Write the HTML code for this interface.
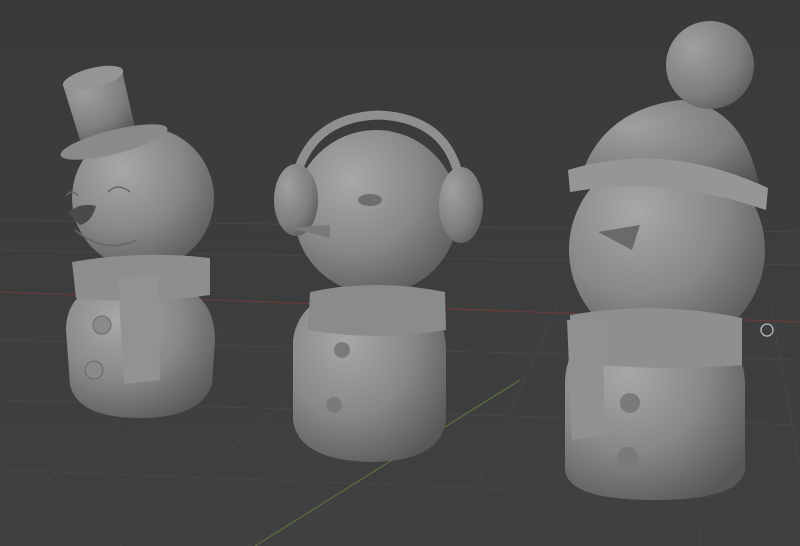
<!DOCTYPE html>
<html><head><meta charset="utf-8"><style>
html,body{margin:0;padding:0;background:#3d3d3d;overflow:hidden}
svg{display:block}
</style></head><body>
<svg width="800" height="546" viewBox="0 0 800 546" xmlns="http://www.w3.org/2000/svg">
<defs>
<radialGradient id="g" cx="0.35" cy="0.3" r="0.8">
<stop offset="0" stop-color="#a8a8a8"/><stop offset="0.55" stop-color="#878787"/><stop offset="1" stop-color="#585858"/>
</radialGradient>
<radialGradient id="g2" cx="0.3" cy="0.3" r="0.9">
<stop offset="0" stop-color="#a0a0a0"/><stop offset="0.6" stop-color="#7e7e7e"/><stop offset="1" stop-color="#505050"/>
</radialGradient>
<linearGradient id="bg" x1="0" y1="0" x2="0" y2="1">
<stop offset="0" stop-color="#3a3a3a"/><stop offset="1" stop-color="#404040"/>
</linearGradient>
</defs>
<rect width="800" height="546" fill="url(#bg)"/>
<g stroke="#464646" stroke-width="1">
<path d="M0 250 L800 265 M0 340 L800 360 M0 400 L800 425 M0 470 L800 500 M0 220 L800 232"/>
<path d="M0 520 L260 300 M120 546 L400 300 M450 546 L560 300 M700 546 L690 300 M800 470 L770 300"/>
</g>
<path d="M0 292 L800 322" stroke="#6a3a3a" stroke-width="1.2"/>
<path d="M255 546 L520 380" stroke="#5a7040" stroke-width="1.2"/>

<!-- snowman 1 -->
<path d="M66 330 Q66 280 140 278 Q215 280 215 340 L212 385 Q200 418 140 418 Q78 418 70 385 Z" fill="url(#g)"/>
<circle cx="143" cy="198" r="71" fill="url(#g)"/>
<path d="M72 262 Q140 250 210 258 L210 295 Q140 305 76 298 Z" fill="#8e8e8e"/>
<path d="M118 278 L158 276 L160 380 L124 384 Z" fill="#929292"/>
<path d="M63 85 L122 70 L135 128 L80 140 Z" fill="url(#g2)"/>
<ellipse cx="93" cy="78" rx="31" ry="10" fill="#959595" transform="rotate(-14 93 78)"/>
<ellipse cx="114" cy="142" rx="55" ry="12" fill="#8a8a8a" transform="rotate(-14 114 142)"/>
<path d="M68 213 Q80 202 96 206 Q92 222 80 225 Z" fill="#4a4a4a"/>
<path d="M108 192 Q118 182 130 192 M66 196 Q72 188 78 196" stroke="#666" stroke-width="1.5" fill="none"/>
<path d="M75 230 Q105 255 136 240" stroke="#666" stroke-width="1.5" fill="none"/>
<circle cx="102" cy="325" r="9" fill="#8a8a8a" stroke="#6a6a6a"/><circle cx="94" cy="370" r="9" fill="#8a8a8a" stroke="#6a6a6a"/>

<!-- snowman 2 -->
<path d="M293 340 Q300 290 370 288 Q445 290 446 350 L446 420 Q440 462 370 462 Q298 460 293 420 Z" fill="url(#g)"/>
<circle cx="376" cy="212" r="82" fill="url(#g)"/>
<path d="M292 200 Q300 118 378 115 Q458 118 462 200" fill="none" stroke="#8f8f8f" stroke-width="9"/>
<ellipse cx="296" cy="200" rx="22" ry="36" fill="url(#g2)"/>
<ellipse cx="461" cy="205" rx="22" ry="38" fill="url(#g2)"/>
<path d="M310 292 Q375 278 445 292 L446 330 Q378 342 308 330 Z" fill="#8b8b8b"/>
<path d="M290 228 L330 225 L330 238 Z" fill="#7a7a7a"/>
<ellipse cx="370" cy="200" rx="12" ry="6" fill="#6e6e6e"/>
<circle cx="342" cy="350" r="8" fill="#7a7a7a"/><circle cx="334" cy="405" r="8" fill="#7a7a7a"/>

<!-- snowman 3 -->
<path d="M565 380 Q568 320 655 318 Q745 322 745 385 L745 470 Q740 500 655 500 Q568 500 565 470 Z" fill="url(#g)"/>
<circle cx="667" cy="250" r="98" fill="url(#g)"/>
<path d="M570 315 Q655 300 742 318 L742 365 Q655 372 572 362 Z" fill="#8f8f8f"/>
<path d="M567 320 L602 318 L605 435 L572 440 Z" fill="#919191"/>
<path d="M580 180 Q600 110 680 100 Q745 105 760 190 Z" fill="url(#g2)"/>
<path d="M568 170 Q665 140 768 188 L766 210 Q665 175 570 192 Z" fill="#969696"/>
<circle cx="710" cy="65" r="44" fill="url(#g2)"/>
<path d="M598 232 L640 225 L632 250 Z" fill="#6a6a6a"/>
<circle cx="630" cy="403" r="10" fill="#7a7a7a"/><circle cx="628" cy="458" r="11" fill="#7a7a7a"/>
<circle cx="767" cy="330" r="6" fill="none" stroke="#bbb" stroke-width="1.3"/>
</svg>
</body></html>
